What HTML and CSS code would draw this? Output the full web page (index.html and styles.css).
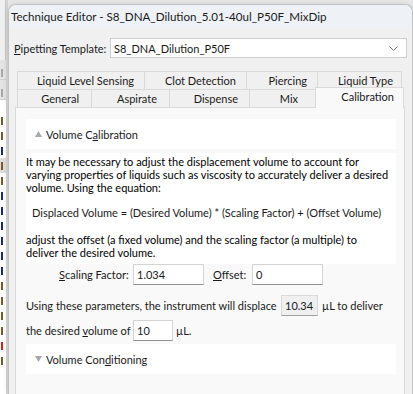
FILE: index.html
```html
<!DOCTYPE html>
<html lang="en">
<head>
    <meta charset="UTF-8">
    <title>Technique Editor</title>
    <link rel="stylesheet" href="styles.css">
</head>
<body>
    <div class="desk">
        <div class="behind">
            <div class="behind-top"></div>
            <div class="behind-btn"><i class="mark grey"></i></div>
            <div class="behind-btn"><i class="mark grey"></i></div>
            <div class="behind-list">
                <i class="mark"></i><i class="mark"></i><i class="mark blue"></i><i class="mark sel"></i><i class="mark"></i>
                <i class="mark blue"></i><i class="mark blue"></i><i class="mark blue"></i><i class="mark blue"></i>
                <i class="mark blue"></i><i class="mark blue"></i><i class="mark"></i><i class="mark"></i><i class="mark"></i>
                <i class="mark"></i><i class="mark red"></i><i class="mark"></i>
            </div>
        </div>

        <div class="window">
            <div class="titlebar">Technique Editor - S8_DNA_Dilution_5.01-40ul_P50F_MixDip</div>
            <div class="win-body">
                <div class="template-row">
                    <label class="template-label"><u>P</u>ipetting Template:</label>
                    <div class="combo">
                        <span>S8_DNA_Dilution_P50F</span>
                        <svg class="chevron" width="9" height="5" viewBox="0 0 9 5"><path d="M0.5 0.5 L4.5 4.5 L8.5 0.5" fill="none" stroke="#707070" stroke-width="1"/></svg>
                    </div>
                </div>

                <div class="tabs">
                    <div class="tab-row back">
                        <div class="tab w-lls">Liquid Level Sensing</div>
                        <div class="tab w-clot">Clot Detection</div>
                        <div class="tab w-pierce">Piercing</div>
                        <div class="tab w-type">Liquid Type</div>
                    </div>
                    <div class="tab-row front">
                        <div class="tab w-gen">General</div>
                        <div class="tab w-asp">Aspirate</div>
                        <div class="tab w-disp">Dispense</div>
                        <div class="tab w-mix">Mix</div>
                        <div class="tab w-cal active">Calibration</div>
                    </div>
                </div>

                <div class="tab-panel">
                    <div class="section-head">
                        <svg class="arrow" width="7" height="6" viewBox="0 0 7 6"><path d="M3.5 0 L7 6 L0 6 Z" fill="#a8a8a8"/></svg>
                        <span>Volume C<u>a</u>libration</span>
                    </div>
                    <div class="desc">
                        <p>It may be necessary to adjust the displacement volume to account for<br>varying properties of liquids such as viscosity to accurately deliver a desired<br>volume. Using the equation:</p>
                        <p class="equation">Displaced Volume = (Desired Volume) * (Scaling Factor) + (Offset Volume)</p>
                        <p>adjust the offset (a fixed volume) and the scaling factor (a multiple) to<br>deliver the desired volume.</p>
                    </div>

                    <div class="factor-row">
                        <label class="lbl-scale"><u>S</u>caling Factor:</label>
                        <div class="field w-scale">1.034</div>
                        <label class="lbl-offset"><u>O</u>ffset:</label>
                        <div class="field w-offset">0</div>
                    </div>

                    <div class="calc-row">
                        <span class="calc-long">Using these parameters, the instrument will displace</span>
                        <div class="field readonly">10.34</div>
                        <span>µL to deliver</span>
                    </div>
                    <div class="calc-row second">
                        <span class="calc-short">the desired <u>v</u>olume of</span>
                        <div class="field w-vol">10</div>
                        <span>µL.</span>
                    </div>

                    <div class="section-head closed">
                        <svg class="arrow" width="7" height="6" viewBox="0 0 7 6"><path d="M0 0 L7 0 L3.5 6 Z" fill="#a8a8a8"/></svg>
                        <span>Volume Con<u>d</u>itioning</span>
                    </div>
                </div>
            </div>
        </div>
    </div>
</body>
</html>
```

FILE: styles.css
```css
* {
    box-sizing: border-box;
}

body {
    margin: 0;
    background-color: #e9e9e9;
    font-family: 'Lato', 'Liberation Sans', sans-serif;
    font-size: 11px;
    color: #1a1a1a;
    width: 413px;
    height: 394px;
    overflow: hidden;
    white-space: nowrap;
}

.desk {
    display: flex;
    height: 394px;
}

/* the window lying underneath, only its edge shows */
.behind {
    width: 8px;
    flex-shrink: 0;
    background-color: #ffffff;
    border-right: 2px solid #d6d6d6;
    overflow: hidden;
}

.behind-top {
    height: 60px;
    background-color: #f0f0f0;
    border-right: 1px solid #c9c9c9;
}

.behind-btn {
    height: 20px;
    background-color: #e4e4e4;
    border-bottom: 1px solid #cfcfcf;
    padding-top: 5px;
}

.behind-list {
    padding-top: 13px;
    display: flex;
    flex-direction: column;
}

/* clipped glyph ends of the list behind */
.mark {
    display: block;
    width: 6px;
    height: 15px;
    padding: 4px 0 3px 1px;
}

.mark::before {
    content: '';
    display: block;
    width: 2px;
    height: 8px;
    background-color: #7a5a2a;
}

.mark.grey::before {
    background-color: #a8a8a8;
}

.mark.blue::before {
    background-color: #1a2a7a;
}

.mark.red::before {
    background-color: #d02020;
}

.mark.sel {
    background-color: #dedede;
}

.window {
    margin-top: 4px;
    flex: 1;
    background-color: #f0f0f0;
    border: 1px solid #c2c2c2;
    border-bottom: none;
    border-radius: 8px 8px 0 0;
    box-shadow: 0 0 6px rgba(0, 0, 0, 0.12);
    overflow: hidden;
}

.titlebar {
    height: 23px;
    line-height: 24px;
    padding-left: 2px;
    font-size: 11.6px;
    background-color: #eef2f7;
    color: #1a1a1a;
}

.win-body {
    padding: 10px 0 0 5px;
}

.template-row {
    display: flex;
    align-items: center;
    height: 20px;
}

.template-label {
    width: 96px;
}

.combo {
    width: 297px;
    height: 20px;
    background-color: #ffffff;
    border: 1px solid #cfcfcf;
    display: flex;
    align-items: center;
    justify-content: space-between;
    padding: 0 8px 0 3px;
}

.tabs {
    margin-top: 13px;
    margin-left: 3px;
}

.tab-row {
    display: flex;
}

.tab {
    height: 18px;
    line-height: 18px;
    text-align: right;
    padding-right: 10px;
    background-color: #f0f0f0;
    border: 1px solid #dadada;
    border-right: none;
    border-bottom: none;
}

.tab-row.back .tab:last-child {
    border-right: 1px solid #dadada;
}

.w-lls { width: 127px; }
.w-clot { width: 102px; }
.w-pierce { width: 71px; }
.w-type { width: 85px; padding-right: 8px; }
.w-gen { width: 74px; padding-right: 12px; }
.w-asp { width: 78px; padding-right: 12px; }
.w-disp { width: 80px; padding-right: 11px; }
.w-mix { width: 66px; padding-right: 17px; }

.tab.active {
    width: 89px;
    height: 21px;
    line-height: 17px;
    margin-top: -2px;
    margin-bottom: -1px;
    background-color: #f9f9f9;
    border-right: 1px solid #dadada;
    padding-right: 9px;
    position: relative;
}

.tab-panel {
    margin-left: 1px;
    width: 390px;
    height: 290px;
    background-color: #f9f9f9;
    border: 1px solid #dadada;
    border-bottom: none;
    padding: 11px 8px 0 10px;
}

.section-head {
    height: 30px;
    background-color: #ffffff;
    display: flex;
    align-items: center;
    padding-left: 9px;
}

.section-head .arrow {
    margin-right: 4px;
}

.section-head.closed {
    margin-top: 3px;
}

.desc {
    margin-top: 4px;
    background-color: #ffffff;
    height: 111px;
    line-height: 13px;
    padding-top: 2px;
    color: #000000;
}

.desc p {
    margin: 0;
}

.desc .equation {
    margin: 12px 0 14px 6px;
    color: #1a1a1a;
}

.factor-row {
    display: flex;
    align-items: center;
    height: 21px;
}

.lbl-scale {
    margin-left: 33px;
    width: 74px;
}

.lbl-offset {
    margin-left: 9px;
    width: 39px;
}

.field {
    height: 21px;
    background-color: #ffffff;
    border: 1px solid #d4d4d4;
    border-bottom: 1px solid #8f8f8f;
    padding-left: 3px;
    line-height: 19px;
}

.w-scale { width: 71px; }
.w-offset { width: 71px; }

.calc-row {
    display: flex;
    align-items: center;
    margin-top: 10px;
    height: 21px;
}

.calc-row.second {
    margin-top: 4px;
}

.calc-long {
    width: 253px;
}

.calc-short {
    width: 107px;
}

.field.readonly {
    width: 37px;
    background-color: #f0f0f0;
    border-color: #dadada;
    border-bottom-color: #a0a0a0;
    margin: 0 4px 0 2px;
}

.w-vol {
    width: 40px;
    margin-right: 3px;
}
```
